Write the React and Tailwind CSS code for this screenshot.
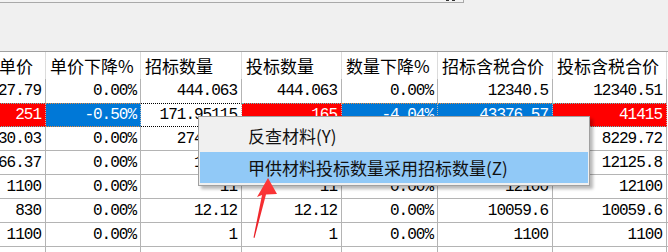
import React from 'react';

// column widths incl. right border; table is shifted 5px left so the first column is clipped
const widths = [51, 95, 101, 100, 96, 115, 114, 30];
const headers = ['单价', '单价下降%', '招标数量', '投标数量', '数量下降%', '招标含税合价', '投标含税合价', ''];

// cells that sit fully under the context menu are left blank
const rows = [
  ['27.79', '0.00%', '444.063', '444.063', '0.00%', '12340.5', '12340.51', ''],
  ['251', '-0.50%', '171.95115', '165', '-4.04%', '43376.57', '41415', ''],
  ['30.03', '0.00%', '274.054', '', '', '', '8229.72', ''],
  ['66.37', '0.00%', '182.7', '', '', '', '12125.8', ''],
  ['1100', '0.00%', '11', '11', '0.00%', '12100', '12100', ''],
  ['830', '0.00%', '12.12', '12.12', '0.00%', '10059.6', '10059.6', ''],
  ['1100', '0.00%', '1', '1', '0.00%', '1100', '1100', ''],
  ['', '', '', '', '', '', '', ''],
];

// colours of the selected row: r = red, b = blue, w = focused white cell
const selTone = ['r', 'b', 'w', 'r', 'b', 'b', 'r', 'n'];

const cjk = "font-['Noto_Sans_CJK_SC','Noto_Sans',sans-serif]";
const mono = "font-['Liberation_Mono','DejaVu_Sans_Mono',monospace]";

const toneClass = {
  r: 'bg-[#ff0000] text-white border-y border-dotted border-y-[#5cc8c8]',
  b: 'bg-[#0078d7] text-white border-y border-dotted border-y-[#e88a3c]',
  w: 'bg-white text-black border-y border-dotted border-y-black',
  n: 'bg-white',
};

const Arrow = () => (
  <svg className="absolute left-[245px] top-[170px]" width="40" height="72" viewBox="245 170 40 72">
    <defs>
      <linearGradient id="ar" x1="0" y1="0" x2="0" y2="1">
        <stop offset="0" stopColor="#ff3b3b" />
        <stop offset="1" stopColor="#e81d25" />
      </linearGradient>
    </defs>
    <polygon
      points="268,178 277,194 266,194.5 254.5,238 253.5,237.5 262,195 257,197"
      fill="url(#ar)"
    />
  </svg>
);

const App = () => {
  return (
    <div className="relative w-[668px] h-[252px] overflow-hidden bg-[#f0f0f0]">
      {/* toolbar strip */}
      <div className="h-[51px] bg-[#f0f0f0]">
        <div className="flex justify-end gap-[3px] pr-[8px] w-[464px] h-[3px] bg-[#f3f3f3] border-b border-r border-[#a9a9a9]">
          <span className="w-[3px] h-[1px] bg-[#333]" />
          <span className="w-[3px] h-[1px] bg-[#333]" />
        </div>
      </div>

      {/* grid */}
      <div className="border-t border-[#a0a0a0] ml-[-5px] w-[680px] bg-white">
        <div className="flex h-[27px] bg-white">
          {headers.map((h, i) => (
            <div
              key={i}
              style={{ width: widths[i] }}
              className={`shrink-0 flex items-center pl-[4px] border-r border-[#dcdcdc] text-[17px] leading-none text-black whitespace-nowrap ${cjk}`}
            >
              {h}
            </div>
          ))}
        </div>

        {rows.map((r, ri) => (
          <div
            key={ri}
            className={`flex h-[24px] ${ri <= 1 ? '' : 'border-b border-[#b4b4b4]'}`}
          >
            {r.map((v, ci) => (
              <div
                key={ci}
                style={{ width: widths[ci] }}
                className={`shrink-0 flex items-center justify-end pr-[4px] border-r border-r-[#b4b4b4] text-[16px] tracking-[-1px] leading-none whitespace-nowrap ${mono} ${
                  ri === 1 ? toneClass[selTone[ci]] : 'text-black'
                }`}
              >
                {v}
              </div>
            ))}
          </div>
        ))}
      </div>

      {/* context menu */}
      <div className={`absolute left-[198px] top-[116px] w-[392px] bg-[#f0f0f0] border border-[#a0a0a0] px-[1px] py-[2px] shadow-[3px_3px_3px_rgba(0,0,0,0.28)] ${cjk}`}>
        <div className="h-[33px] flex items-center pl-[48px] text-[17px] leading-none text-[#111]">
          反查材料(Y)
        </div>
        <div className="h-[31px] flex items-center pl-[48px] text-[17px] leading-none text-[#111] bg-[#91c9f7]">
          甲供材料投标数量采用招标数量(Z)
        </div>
      </div>

      <Arrow />
    </div>
  );
};

export default App;
